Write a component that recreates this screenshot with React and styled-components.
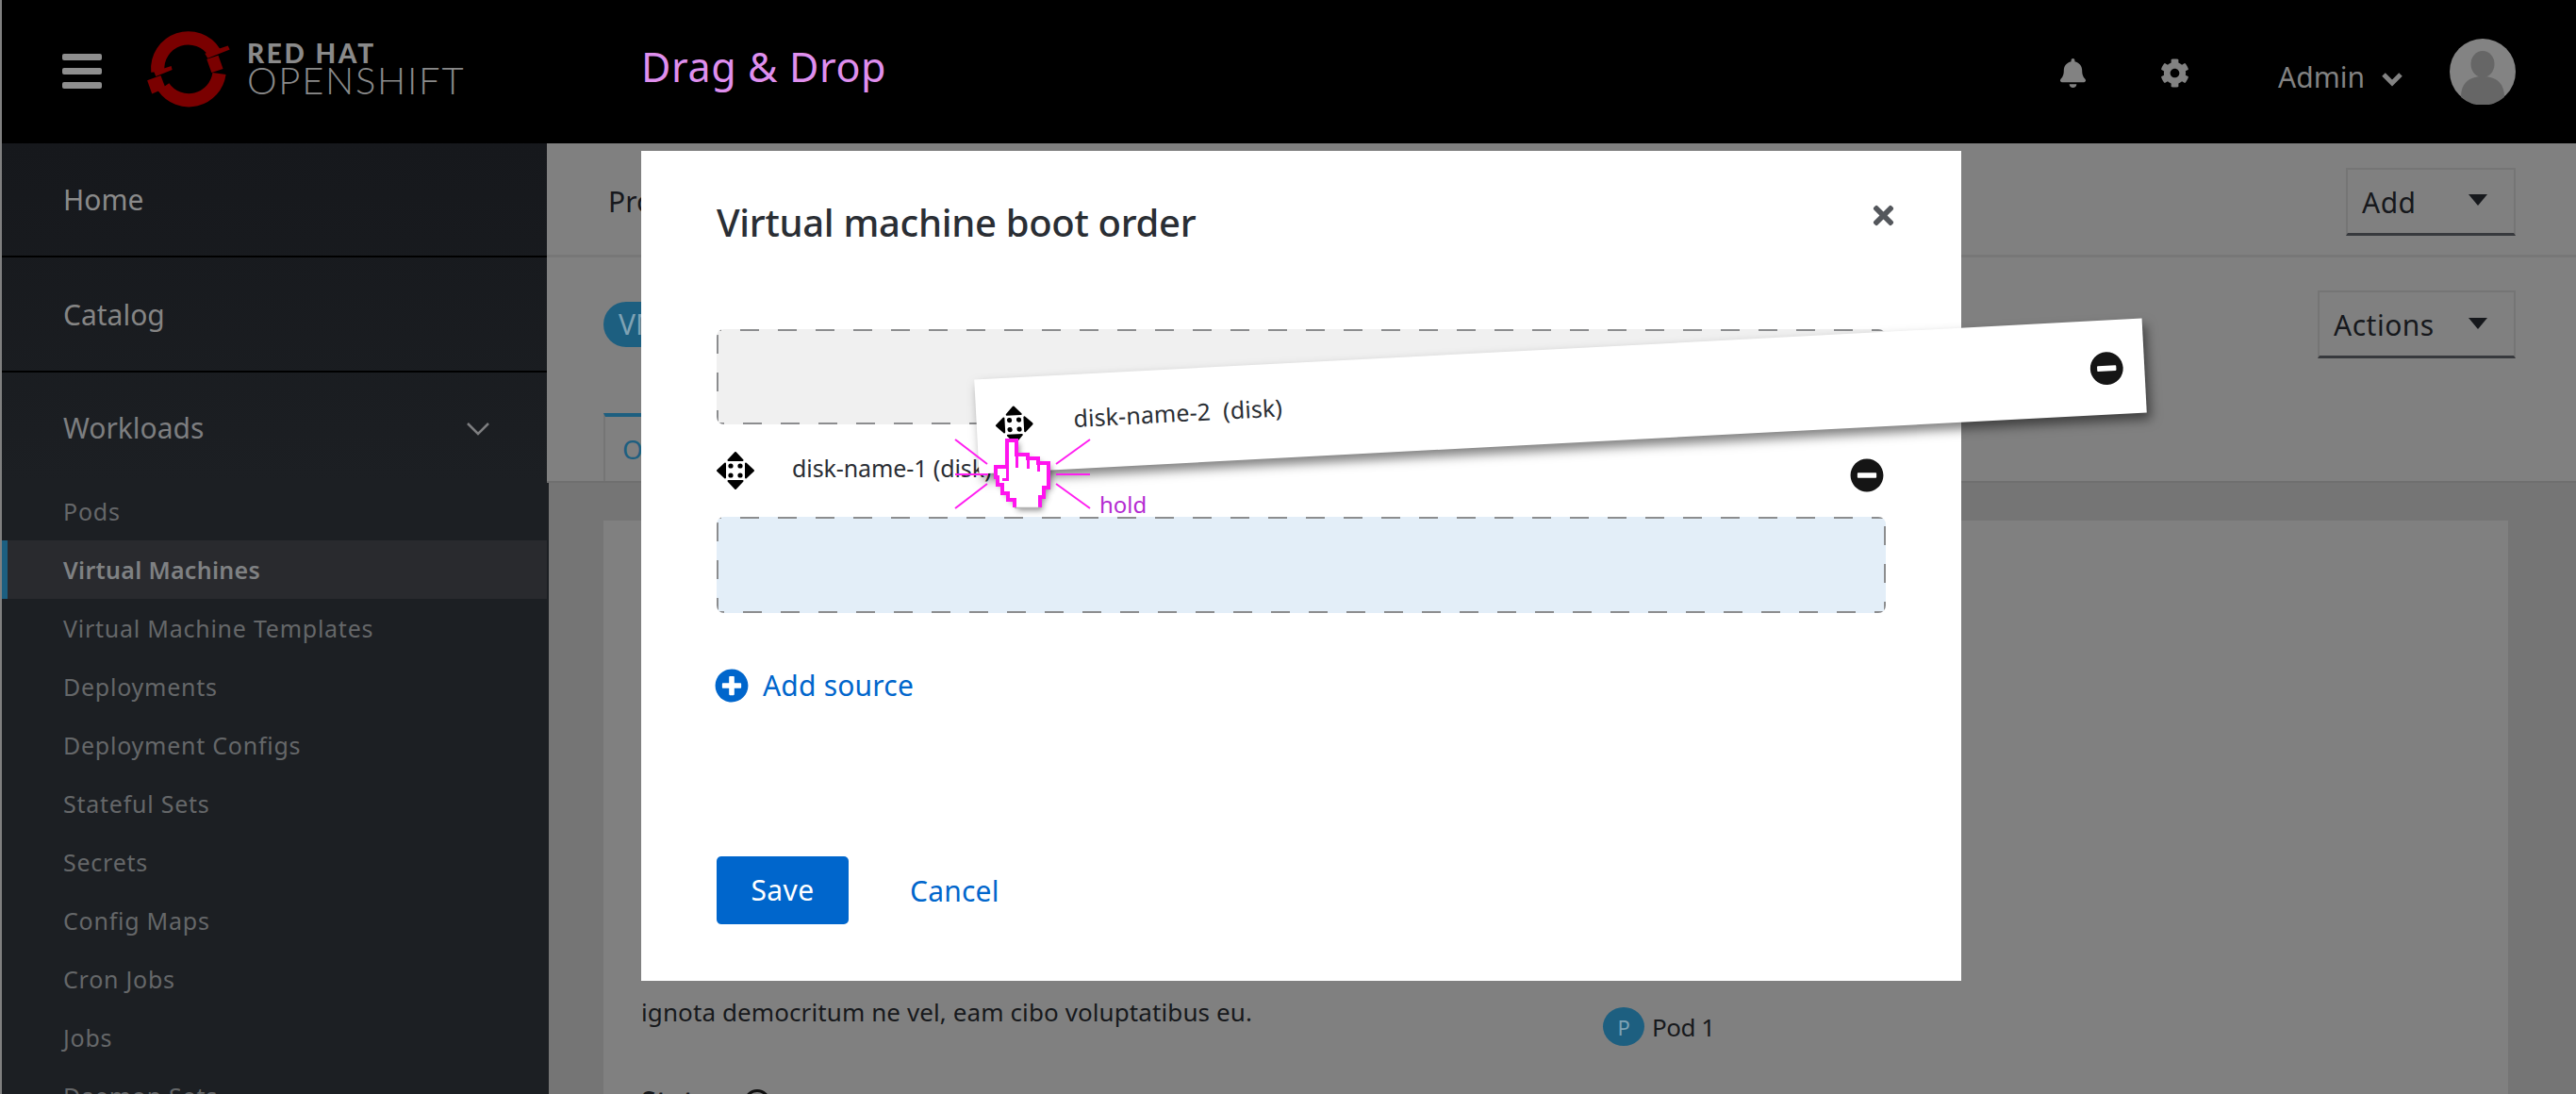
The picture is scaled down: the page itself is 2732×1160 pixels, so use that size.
import React from 'react'
import styled, { createGlobalStyle } from 'styled-components'
import { FaBell, FaCog, FaTimes, FaPlusCircle, FaMinusCircle } from 'react-icons/fa'

const GlobalStyle = createGlobalStyle`
  html, body {
    margin: 0;
    padding: 0;
    background: #808080;
  }
  * {
    box-sizing: border-box;
  }
`

const Page = styled.div`
  position: relative;
  width: 2732px;
  height: 1160px;
  overflow: hidden;
  padding-left: 2px;
  background: #808080;
  font-family: 'Noto Sans', 'Open Sans', sans-serif;
  display: grid;
  grid-template-rows: 152px 1fr;
`

const Header = styled.header`
  background: #000;
  display: flex;
  align-items: center;
  padding-left: 64px;
`
const Burger = styled.div`
  width: 42px;
  display: flex;
  flex-direction: column;
  gap: 8px;
  margin-top: -1px;
  span {
    height: 7px;
    border-radius: 2px;
    background: #8e8e8e;
  }
`
const LogoMark = styled.svg`
  width: 112px;
  height: 102px;
  margin-left: 40px;
  margin-top: -2px;
  flex: none;
`
const LogoText = styled.div`
  margin-left: 2px;
  width: 418px;
  margin-top: -6px;
  color: #8a8a8a;
  font-family: 'Lato', sans-serif;
`
const LogoTop = styled.div`
  font-size: 28px;
  line-height: 24px;
  font-weight: 900;
  letter-spacing: 2.6px;
`
const LogoBottom = styled.div`
  font-size: 40px;
  line-height: 34px;
  font-weight: 300;
  letter-spacing: 1.7px;
`
const AppTitle = styled.div`
  color: #df8fee;
  font-size: 43px;
  line-height: 50px;
  letter-spacing: 0.6px;
  margin-top: -10px;
`
const HeaderRight = styled.div`
  margin-left: auto;
  display: flex;
  align-items: center;
  padding-right: 64px;
  margin-top: 3px;
  color: #828282;
`
const HeaderIcon = styled.span`
  display: flex;
  font-size: 31px;
  margin-right: ${(p) => p.$gap}px;
`
const AdminLabel = styled.span`
  font-size: 30px;
  line-height: 40px;
  margin-top: 8px;
`
const AdminChevron = styled.svg`
  width: 24px;
  height: 16px;
  margin: 12px 49px 0 17px;
`
const Avatar = styled.svg`
  width: 70px;
  height: 70px;
  margin-top: -4px;
`

const Body = styled.div`
  display: grid;
  grid-template-columns: 578px 1fr;
  min-height: 0;
`
const Sidebar = styled.nav`
  background: linear-gradient(#16181c 0, #1c1f23 360px);
  overflow: hidden;
`
const NavSection = styled.div`
  height: ${(p) => p.$h}px;
  padding: 0 66px 0 65px;
  display: flex;
  align-items: center;
  justify-content: space-between;
  color: ${(p) => p.$color};
  font-size: 30px;
  border-bottom: ${(p) => (p.$line ? '2px solid #000' : 'none')};
`
const NavChevron = styled.svg`
  width: 26px;
  height: 16px;
  margin: 3px -6px 0 0;
`
const NavItem = styled.div`
  height: 62px;
  line-height: 62px;
  padding-left: ${(p) => (p.$active ? 59 : 65)}px;
  font-size: 25px;
  letter-spacing: ${(p) => (p.$active ? 0.3 : 0.75)}px;
  font-weight: ${(p) => (p.$active ? 600 : 400)};
  color: ${(p) => (p.$active ? '#7f8183' : '#656769')};
  background: ${(p) => (p.$active ? '#292a2e' : 'transparent')};
  border-left: ${(p) => (p.$active ? '6px solid #1c5f80' : 'none')};
`

const Main = styled.main`
  display: grid;
  grid-template-rows: 121px 239px 1fr;
  min-width: 0;
`
const TopBar = styled.div`
  display: flex;
  align-items: center;
  justify-content: space-between;
  padding: 5px 64px 0 65px;
  border-bottom: 3px solid #777;
  font-size: 30px;
  color: #16181c;
`
const Dropdown = styled.div`
  width: ${(p) => p.$w}px;
  height: 72px;
  border: 2px solid #757575;
  border-bottom: 3px solid #37393d;
  padding: 2px 28px 0 15px;
  display: flex;
  align-items: center;
  justify-content: space-between;
  font-size: 30px;
  letter-spacing: 0.5px;
  color: #16181c;
`
const Caret = styled.span`
  width: 0;
  height: 0;
  border-left: 10px solid transparent;
  border-right: 10px solid transparent;
  border-top: 12px solid #16181c;
  margin-top: -4px;
`
const DetailBar = styled.div`
  display: flex;
  flex-direction: column;
  border-bottom: 2px solid #6f6f6f;
`
const DetailTop = styled.div`
  display: flex;
  justify-content: space-between;
  padding: 35px 64px 0 60px;
  height: 172px;
`
const VmPill = styled.span`
  height: 48px;
  margin-top: 12px;
  padding: 0 16px;
  border-radius: 24px;
  background: #1d5f80;
  color: #7fa2b4;
  font-size: 30px;
  line-height: 48px;
`
const Tabs = styled.div`
  display: flex;
  padding-left: 60px;
  flex: 1;
`
const Tab = styled.div`
  border-top: 4px solid #1d5f80;
  border-left: 2px solid #757575;
  padding: 14px 18px;
  color: #1d5f80;
  font-size: 28px;
  line-height: 40px;
`
const Content = styled.div`
  background: #757575;
  border-left: 2px solid #1c1f23;
  padding: 40px 72px 0 58px;
  min-height: 0;
`
const ContentCard = styled.section`
  background: #808080;
  height: 700px;
  padding: 0 40px;
  display: grid;
  grid-template-columns: 1020px 1fr;
  color: #17191c;
`
const Paragraph = styled.p`
  margin: 505px 0 0;
  font-size: 26px;
  line-height: 32px;
  letter-spacing: 0.1px;
  white-space: nowrap;
`
const StatusLabel = styled.div`
  margin-top: 62px;
  display: flex;
  align-items: flex-start;
  gap: 20px;
  font-size: 28px;
  font-weight: 700;
  line-height: 32px;
`
const HelpRing = styled.span`
  width: 28px;
  height: 28px;
  margin-top: 4px;
  border: 3px solid #111;
  border-radius: 50%;
`
const PodRow = styled.div`
  margin-top: 516px;
  display: flex;
  align-items: center;
  gap: 8px;
  font-size: 26px;
  letter-spacing: -0.5px;
`
const PodBadge = styled.span`
  width: 44px;
  height: 41px;
  border-radius: 50%;
  background: #1d5f80;
  color: #7fa2b4;
  font-size: 22px;
  display: flex;
  align-items: center;
  justify-content: center;
`

const Modal = styled.div`
  position: absolute;
  left: 680px;
  top: 160px;
  width: 1400px;
  height: 880px;
  background: #fff;
  padding: 0 80px;
  display: flex;
  flex-direction: column;
  color: #2a2e34;
`
const ModalHead = styled.div`
  height: 189px;
  padding-top: 47px;
  display: flex;
  justify-content: space-between;
`
const ModalTitle = styled.h1`
  margin: 0;
  font-size: 40px;
  line-height: 58px;
  font-weight: 500;
  letter-spacing: -0.3px;
`
const CloseBtn = styled.span`
  display: flex;
  font-size: 31px;
  color: #54575c;
  margin: 6px -13px 0 0;
`
const DropZone = styled.div`
  height: ${(p) => p.$h}px;
  border-radius: 8px;
  background-color: ${(p) => p.$bg};
  background-repeat: no-repeat;
  background-size: 100% 2px, 100% 2px, 2px 100%, 2px 100%;
  background-position: 0 0, 0 100%, 0 0, 100% 0;
  background-image:
    repeating-linear-gradient(90deg, #8c8d8f 0 5px, transparent 5px 25px, #8c8d8f 25px 40px),
    repeating-linear-gradient(90deg, #8c8d8f 0 8px, transparent 8px 28px, #8c8d8f 28px 40px),
    repeating-linear-gradient(180deg, transparent 0 6px, #8c8d8f 6px 26px, transparent 26px 40px),
    repeating-linear-gradient(180deg, transparent 0 10px, #8c8d8f 10px 30px, transparent 30px 40px);
`
const DiskRow = styled.div`
  height: 98px;
  display: flex;
  align-items: center;
  font-size: 25px;
  letter-spacing: -0.1px;
  color: #2a2e34;
`
const DiskName = styled.span`
  margin-left: ${(p) => p.$gap}px;
  margin-top: ${(p) => p.$top}px;
  white-space: pre;
`
const MinusBtn = styled.span`
  margin-left: auto;
  display: flex;
  font-size: 36px;
  color: #151515;
  margin-top: ${(p) => p.$top}px;
  margin-right: ${(p) => p.$right}px;
`
const AddSource = styled.div`
  margin-top: 58px;
  display: flex;
  align-items: center;
  gap: 15px;
  margin-left: -2px;
  font-size: 30px;
  line-height: 38px;
  letter-spacing: 0.2px;
  color: #0066cc;
  svg {
    font-size: 36px;
  }
`
const ModalFooter = styled.div`
  margin-top: 162px;
  display: flex;
  align-items: center;
  gap: 65px;
`
const SaveBtn = styled.div`
  width: 140px;
  height: 72px;
  border-radius: 5px;
  background: #0066cc;
  color: #fff;
  font-size: 30px;
  letter-spacing: 0.4px;
  line-height: 72px;
  text-align: center;
`
const CancelLink = styled.div`
  color: #0066cc;
  font-size: 30px;
  letter-spacing: 0.2px;
`

const DragCard = styled.div`
  position: absolute;
  left: 1035px;
  top: 370px;
  width: 1240px;
  height: 100px;
  padding: 0 20px;
  background: #fff;
  display: flex;
  align-items: center;
  font-size: 25px;
  letter-spacing: 0.1px;
  color: #2a2e34;
  transform: rotate(-3deg);
  box-shadow: 4px 7px 12px rgba(0, 0, 0, 0.5);
`
const HandLayer = styled.svg`
  position: absolute;
  left: 1010px;
  top: 460px;
  width: 150px;
  height: 85px;
  overflow: visible;
`
const HoldLabel = styled.span`
  position: absolute;
  left: 1166px;
  top: 520px;
  font-size: 24px;
  line-height: 30px;
  color: #b42ad1;
`
const MoveSvg = styled.svg`
  width: 40px;
  height: 40px;
  flex: none;
`

const MoveIcon = () => (
  <MoveSvg viewBox="-20 -20 40 40">
    <g fill="#000" stroke="#000" strokeWidth="2" strokeLinejoin="round">
      <path d="M0 -19 L7.5 -11 H-7.5 Z" />
      <path d="M0 19 L7.5 11 H-7.5 Z" />
      <path d="M-19 0 L-11 -7.5 V7.5 Z" />
      <path d="M19 0 L11 -7.5 V7.5 Z" />
    </g>
    <g fill="#000">
      <circle cx="-5" cy="-5" r="2.6" />
      <circle cx="5" cy="-5" r="2.6" />
      <circle cx="-5" cy="5" r="2.6" />
      <circle cx="5" cy="5" r="2.6" />
    </g>
  </MoveSvg>
)

const navItems = [
  'Pods',
  'Virtual Machines',
  'Virtual Machine Templates',
  'Deployments',
  'Deployment Configs',
  'Stateful Sets',
  'Secrets',
  'Config Maps',
  'Cron Jobs',
  'Jobs',
  'Daemon Sets',
]

const rays = [
  [3, 6, 37, 32],
  [146, 6, 110, 32],
  [3, 43, 38, 43],
  [110, 43, 146, 43],
  [3, 79, 37, 53],
  [110, 53, 146, 79],
]

const App = () => (
  <Page>
    <GlobalStyle />
    <Header>
      <Burger>
        <span />
        <span />
        <span />
      </Burger>
      <LogoMark viewBox="0 0 110 100">
        <g fill="none" stroke="#7a0000" strokeWidth="14">
          <path d="M19 51 A32 32 0 0 1 78 31" />
          <path d="M25 67 A32 32 0 0 0 83 53" />
        </g>
        <g fill="#7a0000">
          <path d="M8 60 L22 55 L27 68 L13 74 Z" />
          <path d="M70 38 L82 34 L87 48 L75 52 Z" />
          <path d="M15 51 L33 45 L34 49 L17 56 Z" />
          <path d="M68 32 L92 24 L94 28 L71 37 Z" />
        </g>
      </LogoMark>
      <LogoText>
        <LogoTop>RED HAT</LogoTop>
        <LogoBottom>OPENSHIFT</LogoBottom>
      </LogoText>
      <AppTitle>Drag &amp; Drop</AppTitle>
      <HeaderRight>
        <HeaderIcon $gap={77}>
          <FaBell />
        </HeaderIcon>
        <HeaderIcon $gap={94}>
          <FaCog />
        </HeaderIcon>
        <AdminLabel>Admin</AdminLabel>
        <AdminChevron viewBox="0 0 24 16">
          <path d="M3 3 L12 12 L21 3" fill="none" stroke="#828282" strokeWidth="5" />
        </AdminChevron>
        <Avatar viewBox="0 0 70 70">
          <circle cx="35" cy="35" r="35" fill="#838383" />
          <ellipse cx="35" cy="27" rx="12.5" ry="14" fill="#666" />
          <path d="M12 62 C12 46 22 40 35 40 C48 40 58 46 58 62 A35 35 0 0 1 12 62 Z" fill="#666" />
        </Avatar>
      </HeaderRight>
    </Header>
    <Body>
      <Sidebar>
        <NavSection $h={121} $line $color="#8a8a8a">Home</NavSection>
        <NavSection $h={122} $line $color="#858585">Catalog</NavSection>
        <NavSection $h={116} $color="#7d7e80">
          Workloads
          <NavChevron viewBox="0 0 26 16">
            <path d="M2 2 L13 13 L24 2" fill="none" stroke="#7d7e80" strokeWidth="2.5" />
          </NavChevron>
        </NavSection>
        {navItems.map((item) => (
          <NavItem key={item} $active={item === 'Virtual Machines'}>
            {item}
          </NavItem>
        ))}
      </Sidebar>
      <Main>
        <TopBar>
          <span>Project: default</span>
          <Dropdown $w={180}>
            Add
            <Caret />
          </Dropdown>
        </TopBar>
        <DetailBar>
          <DetailTop>
            <VmPill>VM</VmPill>
            <Dropdown $w={210}>
              Actions
              <Caret />
            </Dropdown>
          </DetailTop>
          <Tabs>
            <Tab>Overview</Tab>
          </Tabs>
        </DetailBar>
        <Content>
          <ContentCard>
            <div>
              <Paragraph>ignota democritum ne vel, eam cibo voluptatibus eu.</Paragraph>
              <StatusLabel>
                Status
                <HelpRing />
              </StatusLabel>
            </div>
            <div>
              <PodRow>
                <PodBadge>P</PodBadge>
                Pod 1
              </PodRow>
            </div>
          </ContentCard>
        </Content>
      </Main>
    </Body>

    <Modal>
      <ModalHead>
        <ModalTitle>Virtual machine boot order</ModalTitle>
        <CloseBtn>
          <FaTimes />
        </CloseBtn>
      </ModalHead>
      <DropZone $h={101} $bg="#f0f0f0" />
      <DiskRow>
        <MoveIcon />
        <DiskName $gap={40} $top={-6}>disk-name-1 (disk)</DiskName>
        <MinusBtn $top={10} $right={2}>
          <FaMinusCircle />
        </MinusBtn>
      </DiskRow>
      <DropZone $h={102} $bg="#e3eef8" />
      <AddSource>
        <FaPlusCircle />
        Add source
      </AddSource>
      <ModalFooter>
        <SaveBtn>Save</SaveBtn>
        <CancelLink>Cancel</CancelLink>
      </ModalFooter>
    </Modal>

    <DragCard>
      <MoveIcon />
      <DiskName $gap={43} $top={-9}>disk-name-2  (disk)</DiskName>
      <MinusBtn $top={2} $right={2}>
        <FaMinusCircle />
      </MinusBtn>
    </DragCard>

    <HandLayer viewBox="0 0 150 85">
      {rays.map(([x1, y1, x2, y2]) => (
        <line key={`${x1}-${y1}`} x1={x1} y1={y1} x2={x2} y2={y2} stroke="#ff1ff0" strokeWidth="2" />
      ))}
      <g style={{ filter: 'drop-shadow(3px 3px 3px rgba(0,0,0,0.45))' }}>
        <path
          d="M58 7 H68 V22 H80 V26 H91 V31 H102 V57 H97 V67 H93 V78 H66 V70 H59 V63 H53 V54 H48 V46 H46 V35 H58 Z"
          fill="#fff"
        />
      </g>
      <g fill="none" stroke="#ff14ee" strokeWidth="4" shapeRendering="crispEdges">
        <path d="M66 78 V70 H59 V63 H53 V54 H48 V46 H46 V35 H58 V7 H68 V22 H80 V26 H91 V31 H102 V57 H97 V67 H93 V78" />
        <path d="M68 22 V36 M80 26 V37 M91 31 V40 M58 35 V48 H53" strokeWidth="3" />
      </g>
      <path d="M66 78.5 H93" stroke="#b5b5b5" strokeWidth="1.5" />
    </HandLayer>
    <HoldLabel>hold</HoldLabel>
  </Page>
)

export default App
